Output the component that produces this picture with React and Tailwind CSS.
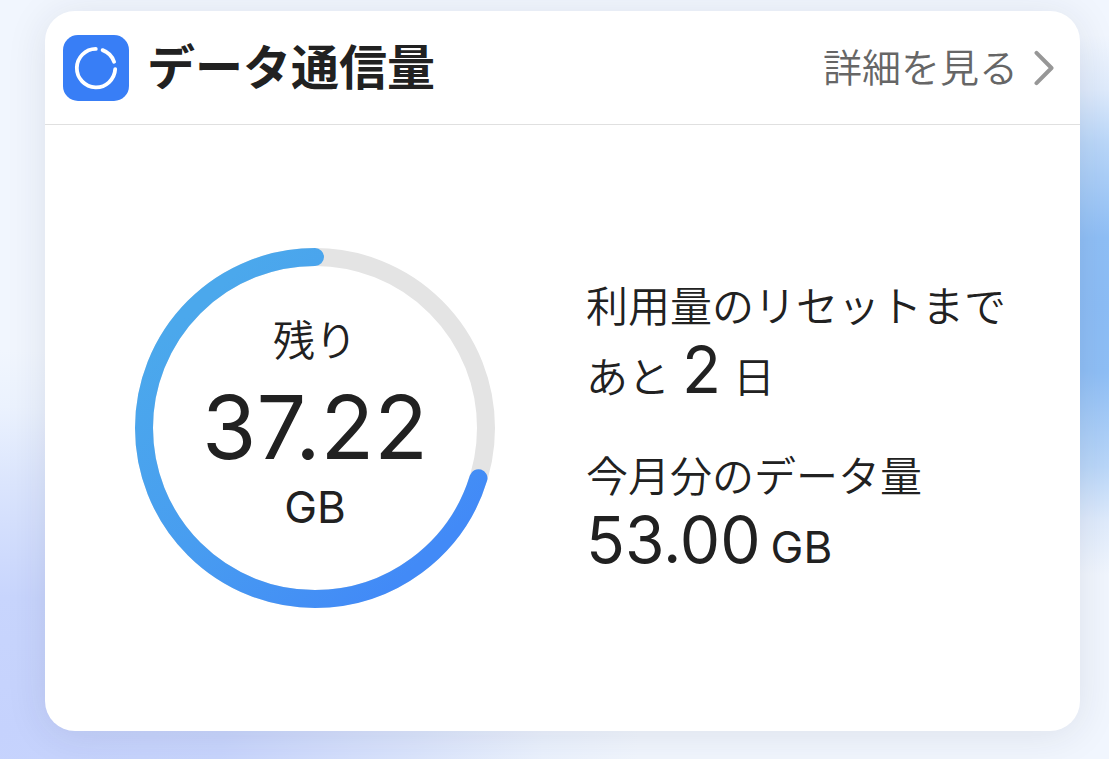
const PLAN_GB = 53.0
const REMAINING_GB = 37.22
const DAYS_TO_RESET = 2

function DataIcon() {
  return (
    <svg viewBox="0 0 66 66" className="size-[66px] shrink-0 rounded-[15px] bg-[#387ef6]" aria-hidden="true">
      <g fill="none" stroke="#fff" strokeWidth="3.8" strokeLinecap="round">
        <path d="M32.8 13.9 A19.2 19.2 0 1 0 52.2 34.2" />
        <path d="M39.6 15.1 A19.2 19.2 0 0 1 51.1 26.8" />
      </g>
    </svg>
  )
}

function Chevron() {
  return (
    <svg viewBox="0 0 20 36" className="h-9 w-5 shrink-0" fill="none" stroke="#979797" strokeWidth="4" strokeLinecap="round" strokeLinejoin="round" aria-hidden="true">
      <path d="M2.5 2.8 L17.5 18 L2.5 33.2" />
    </svg>
  )
}

function UsageRing({ remaining, total }) {
  const length = 2 * Math.PI * 171
  const filled = length * (remaining / total)

  return (
    <div className="grid size-[360px] shrink-0 place-items-center *:col-start-1 *:row-start-1">
      <svg viewBox="0 0 360 360" className="size-full" fill="none" strokeWidth="18" aria-hidden="true">
        <defs>
          <linearGradient id="ring" gradientUnits="userSpaceOnUse" x1="60" y1="60" x2="290" y2="310">
            <stop offset="0" stopColor="#4ba8ec" />
            <stop offset="0.5" stopColor="#489df0" />
            <stop offset="1" stopColor="#428af7" />
          </linearGradient>
        </defs>
        <circle cx="180" cy="180" r="171" stroke="#e4e4e4" />
        {/* runs counter-clockwise from 12 o'clock */}
        <path
          d="M180 9 A171 171 0 0 0 180 351 A171 171 0 0 0 180 9"
          stroke="url(#ring)"
          strokeLinecap="round"
          strokeDasharray={`${filled} ${length}`}
        />
      </svg>
      <div className="flex flex-col items-center pb-[14px]">
        <span className="text-[42px] leading-[60px] font-[350]">残り</span>
        <span className="text-[88px] leading-[112px]">{remaining.toFixed(2)}</span>
        <span className="text-[44px] leading-[48px]">GB</span>
      </div>
    </div>
  )
}

function App() {
  return (
    <main
      lang="ja"
      className="flex min-h-screen flex-col bg-[#f1f6fe] bg-[radial-gradient(ellipse_640px_380px_at_0px_730px,#c5d2fd_0%,#c8d5fd_35%,#dbe5fd_65%,#ebf2fe_85%,#f1f6fe00_100%),radial-gradient(ellipse_300px_270px_at_1100px_305px,#8cbdf6_0%,#8fbff6_25%,#bad7f9_60%,#dfebfc_80%,#f1f6fe00_100%)] pt-[11px] pr-[29px] pb-7 pl-[45px] font-['Inter','Noto_Sans_CJK_JP',sans-serif] text-[#212121]"
    >
      <section className="flex flex-1 flex-col rounded-[30px] bg-white shadow-[0_4px_40px_rgba(40,40,60,0.1)]">
        <header className="flex h-[114px] items-center border-b border-[#e0e0e0] pr-[26px] pl-[18px]">
          <DataIcon />
          <h1 className="ml-[18px] text-[48px] leading-[66px] font-bold">データ通信量</h1>
          <a href="#detail" className="ml-auto flex items-center gap-4 text-[39px] leading-[56px] font-[350] text-[#666]">
            詳細を見る
            <Chevron />
          </a>
        </header>

        <div className="flex flex-1 items-center gap-[91px] pl-[90px]">
          <UsageRing remaining={REMAINING_GB} total={PLAN_GB} />

          <div className="flex flex-col gap-9 text-[42px] font-[350]">
            <div>
              <p className="leading-[60px]">利用量のリセットまで</p>
              <p className="flex items-baseline gap-3 leading-[66px]">
                あと <span className="text-[64px] font-normal">{DAYS_TO_RESET}</span> 日
              </p>
            </div>
            <div>
              <p className="leading-[60px]">今月分のデータ量</p>
              <p className="flex items-baseline gap-2.5 leading-[66px] font-normal">
                <span className="text-[64px]">{PLAN_GB.toFixed(2)}</span>
                <span className="text-[44px]">GB</span>
              </p>
            </div>
          </div>
        </div>
      </section>
    </main>
  )
}

export default App
